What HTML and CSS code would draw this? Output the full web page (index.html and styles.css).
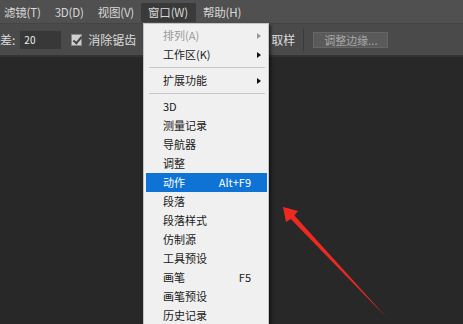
FILE: index.html
```html
<!DOCTYPE html>
<html lang="zh-CN">
<head>
  <meta charset="UTF-8" />
  <title>窗口菜单</title>
  <link rel="stylesheet" href="styles.css">
</head>
<body>
  <div class="app">
    <!-- 菜单栏 -->
    <div class="menubar">
      <span class="menubar-item first">滤镜(T)</span>
      <span class="menubar-item">3D(D)</span>
      <span class="menubar-item">视图(V)</span>
      <span class="menubar-item active">窗口(W)</span>
      <span class="menubar-item">帮助(H)</span>
    </div>

    <!-- 选项栏 -->
    <div class="options">
      <span class="label">差:</span>
      <span class="field">20</span>
      <span class="check"></span>
      <span class="label">消除锯齿</span>
      <span class="label sample">取样</span>
      <span class="divider"></span>
      <span class="btn">调整边缘...</span>
    </div>

    <!-- 工作区 -->
    <div class="workspace"></div>

    <!-- 下拉菜单 -->
    <div class="dropdown">
      <div class="item disabled">排列(A)<span class="sub"></span></div>
      <div class="item">工作区(K)<span class="sub"></span></div>
      <div class="sep"></div>
      <div class="item">扩展功能<span class="sub"></span></div>
      <div class="sep"></div>
      <div class="item">3D</div>
      <div class="item">测量记录</div>
      <div class="item">导航器</div>
      <div class="item">调整</div>
      <div class="item selected">动作<span class="key">Alt+F9</span></div>
      <div class="item">段落</div>
      <div class="item">段落样式</div>
      <div class="item">仿制源</div>
      <div class="item">工具预设</div>
      <div class="item">画笔<span class="key">F5</span></div>
      <div class="item">画笔预设</div>
      <div class="item">历史记录</div>
    </div>

    <!-- 红色箭头标注 -->
    <svg class="arrow" width="463" height="324" viewBox="0 0 463 324">
      <polygon points="283,207 298,211 294.4,215.5 387,318 290.8,218.9 286,222" fill="#ee2a20"/>
    </svg>
  </div>
</body>
</html>
```

FILE: styles.css
```css
* {
  box-sizing: border-box;
  margin: 0;
  padding: 0;
}
body {
  font-family: "Noto Sans CJK SC", "Noto Sans", sans-serif;
  background-color: #282828;
}
.app {
  position: relative;
  width: 463px;
  height: 324px;
  overflow: hidden;
  display: flex;
  flex-direction: column;
}
/* 菜单栏 */
.menubar {
  height: 24px;
  background-color: #505050;
  display: flex;
  align-items: flex-start;
  padding-top: 3px;
  border-bottom: 1px solid #444;
}
.menubar-item {
  height: 19px;
  line-height: 19px;
  font-size: 11.5px;
  color: #d8d8d8;
  padding: 0 7px;
  letter-spacing: -0.2px;
}
.menubar-item.first {
  padding-left: 4px;
}
.menubar-item.active {
  background-color: #3a3a3a;
  padding: 0 8px 0 7px;
}
/* 选项栏 */
.options {
  height: 33px;
  background-color: #4a4a4a;
  display: flex;
  align-items: center;
  font-size: 12px;
  color: #dcdcdc;
  border-bottom: 2px solid #333;
}
.field {
  width: 41px;
  height: 18px;
  margin-left: 5px;
  background-color: #383838;
  color: #eee;
  font-size: 10px;
  line-height: 18px;
  padding-left: 4px;
}
.check {
  width: 11px;
  height: 12px;
  margin: 0 6px 0 10px;
  background-color: #d0d0d0;
  border: 1px solid #888;
  position: relative;
}
.check::after {
  content: "";
  position: absolute;
  left: 3px;
  top: 0;
  width: 3px;
  height: 7px;
  border: solid #444;
  border-width: 0 2px 2px 0;
  transform: rotate(40deg);
}
.sample {
  margin-left: 135px;
}
.divider {
  width: 1px;
  height: 22px;
  background-color: #3a3a3a;
  margin: 0 9px 0 8px;
}
.btn {
  width: 75px;
  height: 16px;
  line-height: 15px;
  background-color: #5a5a5a;
  border: 1px solid #666;
  color: #a8a8a8;
  font-size: 11px;
  text-align: center;
}
.workspace {
  flex: 1;
  background-color: #282828;
}
/* 下拉菜单 */
.dropdown {
  position: absolute;
  left: 143px;
  top: 23px;
  width: 126px;
  height: 310px;
  background-color: #f0f0f0;
  border: 1px solid #c4c4c4;
  padding: 2px 1px 0 2px;
  box-shadow: 2px 2px 3px rgba(0, 0, 0, 0.55);
}
.item {
  height: 19px;
  line-height: 19px;
  font-size: 11px;
  color: #1a1a1a;
  padding: 0 16px 0 17px;
  display: flex;
  justify-content: space-between;
  align-items: center;
}
.item.disabled {
  color: #9a9a9a;
}
.item.selected {
  background-color: #0e73d4;
  color: #fff;
}
.key {
  font-size: 11px;
}
.sub {
  width: 0;
  height: 0;
  margin-right: -10px;
  border-left: 4px solid #111;
  border-top: 3.5px solid transparent;
  border-bottom: 3.5px solid transparent;
}
.disabled .sub {
  border-left-color: #999;
}
.sep {
  height: 7px;
  margin: 0 2px 0 3px;
  position: relative;
}
.sep::after {
  content: "";
  position: absolute;
  left: 0;
  right: 0;
  top: 3px;
  height: 1px;
  background-color: #c8c8c8;
}
/* 标注箭头 */
.arrow {
  position: absolute;
  left: 0;
  top: 0;
}
```
